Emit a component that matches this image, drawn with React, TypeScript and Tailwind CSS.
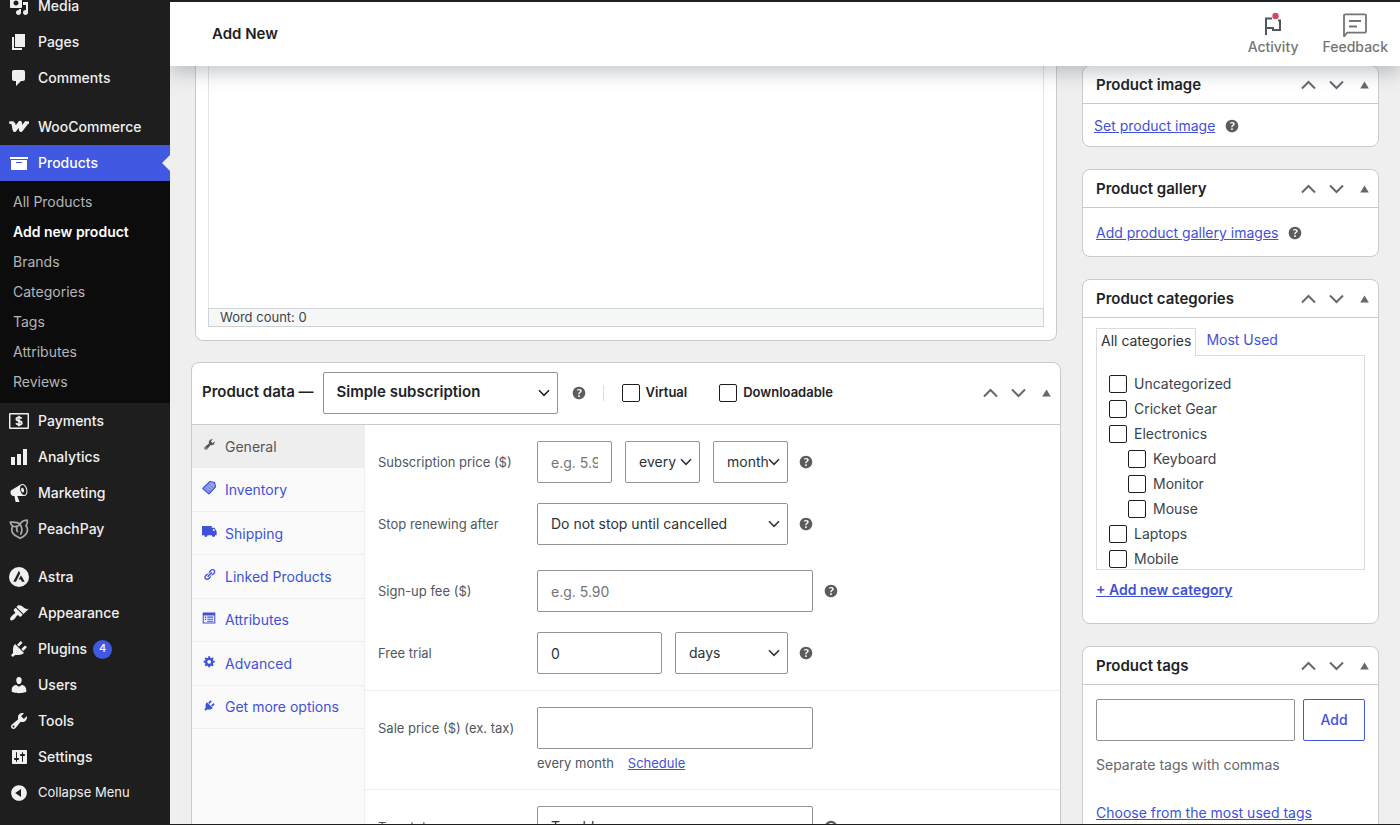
import { useState, type ReactNode } from 'react'
import clsx from 'clsx'

// 20x20 admin icon set
const glyphs = {
  media:
    'M13 11V4c0-.55-.45-1-1-1h-1.67L9 1H5L3.67 3H2c-.55 0-1 .45-1 1v7c0 .55.45 1 1 1h10c.55 0 1-.45 1-1zM7 4.5c1.38 0 2.5 1.12 2.5 2.5S8.38 9.5 7 9.5 4.5 8.38 4.5 7 5.62 4.5 7 4.5zM14 6h5v10.5c0 1.38-1.12 2.5-2.5 2.5S14 17.88 14 16.5s1.12-2.5 2.5-2.5c.17 0 .34.02.5.05V9h-3V6zm-4 8.05V13h2v3.5c0 1.38-1.12 2.5-2.5 2.5S7 17.88 7 16.5 8.12 14 9.5 14c.17 0 .34.02.5.05z',
  page: 'M6 15V2h10v13H6zm-1 1h8v2H3V5h2v11z',
  comments:
    'M5 2h9c1.1 0 2 .9 2 2v7c0 1.1-.9 2-2 2h-2l-5 5v-5H5c-1.1 0-2-.9-2-2V4c0-1.1.9-2 2-2z',
  archive: 'M19 4v2H1V4h18zM2 7h16v10H2V7zm11 3V9H7v1h6z',
  chart: 'M18 18V2h-4v16h4zm-6 0V7H8v11h4zm-6 0v-8H2v8h4z',
  megaphone:
    'M18.15 5.94c.46 1.62.38 3.22-.02 4.48-.42 1.28-1.26 2.18-2.3 2.48-.16.06-.26.06-.4.06-.06.02-.12.02-.18.02-.06.02-.14.02-.22.02h-6.8l2.22 5.5c.02.14-.06.26-.14.34-.08.1-.24.16-.34.16H6.95c-.1 0-.26-.06-.34-.16-.08-.08-.16-.2-.14-.34l-1-5.5H4.25l-.02-.02c-.5.06-1.08-.18-1.54-.62s-.88-1.08-1.06-1.88c-.24-.8-.2-1.56-.02-2.2.18-.62.58-1.08 1.06-1.3l.02-.02 9-5.4c.1-.06.18-.1.24-.16.06-.04.14-.08.24-.12.16-.08.28-.12.5-.18 1.04-.3 2.24.1 3.22.98s1.84 2.24 2.26 3.86zm-2.58 5.98h-.02c.4-.1.74-.34 1.04-.7.58-.7.86-1.76.86-3.04 0-.64-.1-1.3-.28-1.98-.34-1.36-1.02-2.5-1.78-3.24s-1.68-1.1-2.46-.88c-.82.22-1.4.96-1.7 2-.32 1.04-.28 2.36.06 3.72.38 1.36 1 2.5 1.8 3.24.78.74 1.62 1.1 2.48.88zm-2.54-7.08c.22-.04.42-.02.62.04.38.16.76.48 1.02 1s.42 1.2.42 1.78c0 .3-.04.56-.12.8-.18.48-.44.84-.86.94-.34.1-.8-.06-1.14-.4s-.64-.86-.78-1.5c-.18-.62-.12-1.24.02-1.72s.48-.84.82-.94z',
  appearance:
    'M14.48 11.06L7.41 3.99l1.5-1.5c.5-.56 2.3-.47 3.51.32 1.21.8 1.43 1.28 2.91 2.1 1.18.64 2.45 1.26 4.45.85zm-.71.71L6.7 4.7 4.93 6.47c-.39.39-.39 1.02 0 1.41l1.06 1.06c.39.39.39 1.03 0 1.42-.6.6-1.43 1.11-2.21 1.69-.35.26-.7.53-1.01.84C1.43 14.23.4 16.08 1.4 17.07c.99 1 2.84-.03 4.18-1.36.31-.31.58-.66.85-1.02.57-.78 1.08-1.61 1.69-2.21.39-.39 1.02-.39 1.41 0l1.06 1.06c.39.39 1.02.39 1.41 0z',
  plugins:
    'M13.11 4.36L9.87 7.6 8 5.73l3.24-3.24c.35-.34 1.05-.2 1.56.32.52.51.66 1.21.31 1.55zm-8 1.77l.91-1.12 9.01 9.01-1.19.84c-.71.71-2.63 1.16-3.82 1.16H6.14L4.9 17.26c-.59.59-1.54.59-2.12 0-.59-.58-.59-1.53 0-2.12l1.24-1.24v-3.88c0-1.13.4-3.19 1.09-3.89zm7.26 3.97l3.24-3.24c.34-.35 1.04-.21 1.55.31.52.51.66 1.21.31 1.55l-3.24 3.25z',
  users:
    'M10 9.25c-2.27 0-2.73-3.44-2.73-3.44C7 4.02 7.82 2 9.97 2c2.16 0 2.98 2.02 2.71 3.81 0 0-.41 3.44-2.68 3.44zm0 2.57L12.72 10c2.39 0 4.52 2.33 4.52 4.53v2.49s-3.65 1.13-7.24 1.13c-3.65 0-7.24-1.13-7.24-1.13v-2.49c0-2.25 1.94-4.48 4.47-4.48z',
  tools:
    'M16.68 9.77c-1.34 1.34-3.3 1.67-4.95.99l-5.41 6.52c-.99.99-2.59.99-3.58 0s-.99-2.59 0-3.57l6.52-5.42c-.68-1.65-.35-3.61.99-4.95 1.28-1.28 3.12-1.62 4.72-1.06l-2.89 2.89 2.82 2.82 2.86-2.87c.53 1.58.18 3.39-1.08 4.65zM3.81 16.21c.4.39 1.04.39 1.43 0 .4-.4.4-1.04 0-1.43-.39-.4-1.03-.4-1.43 0-.39.39-.39 1.03 0 1.43z',
  settings:
    'M18 16V4c0-.55-.45-1-1-1H4c-.55 0-1 .45-1 1v12c0 .55.45 1 1 1h13c.55 0 1-.45 1-1zM8 11h1c.55 0 1 .45 1 1s-.45 1-1 1H8v1.5c0 .28-.22.5-.5.5s-.5-.22-.5-.5V13H6c-.55 0-1-.45-1-1s.45-1 1-1h1V5.5c0-.28.22-.5.5-.5s.5.22.5.5V11zm5-2h-1c-.55 0-1-.45-1-1s.45-1 1-1h1V5.5c0-.28.22-.5.5-.5s.5.22.5.5V7h1c.55 0 1 .45 1 1s-.45 1-1 1h-1v5.5c0 .28-.22.5-.5.5s-.5-.22-.5-.5V9z',
  collapse:
    'M10 2.16c4.33 0 7.84 3.51 7.84 7.84s-3.51 7.84-7.84 7.84S2.16 14.33 2.16 10 5.71 2.16 10 2.16zm2 11.72V6.12L6.18 9.97z',
  help: 'M17 10c0-3.87-3.14-7-7-7-3.87 0-7 3.13-7 7s3.13 7 7 7c3.86 0 7-3.13 7-7zm-6.3 1.48H9.14v-.43c0-.38.08-.7.24-.98s.46-.57.88-.89c.41-.29.68-.53.81-.71.14-.18.2-.39.2-.62 0-.25-.09-.44-.28-.58-.19-.13-.45-.19-.79-.19-.58 0-1.25.15-2 .45l-.64-1.28c.87-.49 1.8-.74 2.77-.74.81 0 1.45.2 1.92.58.48.39.71.91.71 1.55 0 .43-.09.8-.29 1.11-.19.32-.57.67-1.11 1.06-.38.28-.61.49-.71.63-.1.15-.15.34-.15.57v.47zm-1.47 2.74c-.18-.17-.27-.42-.27-.73 0-.33.08-.58.26-.75s.43-.25.77-.25c.32 0 .57.09.75.26s.27.42.27.74c0 .3-.09.55-.27.72-.18.18-.43.27-.75.27-.33 0-.58-.09-.76-.26z',
  truck:
    'M0 2.500h13v2.500h3.500L19.500 9.500V15h-2a2.200 2.200 0 1 1-4.400 0H7.400A2.200 2.200 0 1 1 3 15H0zM14.500 6.500v2.500h3l-1.500-2.500z',
  links:
    'M17.74 2.76c1.68 1.69 1.68 4.41 0 6.1l-1.53 1.52c-1.12 1.12-2.7 1.47-4.14 1.09l2.62-2.61.76-.77.76-.76c.84-.84.84-2.2 0-3.04-.84-.85-2.2-.85-3.04 0l-.77.76-3.38 3.38c-.37-1.44-.02-3.02 1.1-4.14l1.52-1.53c1.69-1.68 4.42-1.68 6.1 0zM8.59 13.43l5.34-5.34c.42-.42.42-1.1 0-1.52-.44-.43-1.13-.39-1.53 0l-5.33 5.34c-.42.42-.42 1.1 0 1.52.44.43 1.13.39 1.52 0zm-.76 2.29l4.14-4.15c.38 1.44.03 3.02-1.09 4.14l-1.52 1.53c-1.69 1.68-4.41 1.68-6.1 0-1.68-1.68-1.68-4.42 0-6.1l1.53-1.52c1.12-1.12 2.7-1.47 4.14-1.1l-4.14 4.15c-.85.84-.85 2.2 0 3.05.84.84 2.2.84 3.04 0z',
  listView:
    'M19 18V2H1v16h18zM2.500 6.500h15v10h-15zM4 8h2v2H4zM7.500 8H16v1.500H7.500zM4 11h2v2H4zM7.500 11H16v1.500H7.500zM7.500 14H16v1.500H7.500z',
  gear: 'M18 12h-2.18c-.17.7-.44 1.35-.81 1.93l1.54 1.54-2.1 2.1-1.54-1.54c-.58.36-1.23.63-1.91.79V19H8v-2.18c-.68-.16-1.33-.43-1.91-.79l-1.54 1.54-2.12-2.12 1.54-1.54c-.36-.58-.63-1.23-.79-1.91H1V9.03h2.17c.16-.7.44-1.35.8-1.94L2.43 5.55l2.1-2.1 1.54 1.54c.58-.37 1.24-.64 1.93-.81V2h3v2.18c.68.16 1.33.43 1.91.79l1.54-1.54 2.12 2.12-1.54 1.54c.36.59.64 1.24.8 1.94H18V12zm-8.5 1.5c1.66 0 3-1.34 3-3s-1.34-3-3-3-3 1.34-3 3 1.34 3 3 3z',
}

type Glyph = keyof typeof glyphs

function Icon({ name, className }: { name: Glyph; className: string }) {
  return (
    <svg viewBox="0 0 20 20" fill="currentColor" fillRule="evenodd" className={className} aria-hidden="true">
      <path d={glyphs[name]} />
    </svg>
  )
}

function WooIcon() {
  return (
    <svg viewBox="0 0 20 20" fill="none" stroke="currentColor" strokeLinejoin="round" className="size-5" aria-hidden="true">
      <path d="M.2 5.600h4.600" strokeWidth="2.600" />
      <path d="M4.200 5.800 5.600 13 11 5.800 11.900 13 17.600 5.500" strokeWidth="3.900" />
      <path d="M16 5.600h4" strokeWidth="2.600" />
    </svg>
  )
}

function PaymentsIcon() {
  return (
    <svg viewBox="0 0 20 20" fill="none" stroke="currentColor" className="size-5" aria-hidden="true">
      <rect x="0.700" y="2.700" width="18.600" height="14.600" rx="0.500" strokeWidth="1.500" />
      <path d="M10 4.800v10.400" strokeWidth="1.600" />
      <path
        d="M12.700 7.700c-.4-.9-1.400-1.300-2.700-1.300-1.500 0-2.600.6-2.600 1.700 0 2.500 5.300 1.300 5.300 3.800 0 1.100-1.100 1.800-2.700 1.800-1.400 0-2.400-.5-2.800-1.500"
        strokeWidth="1.900"
      />
    </svg>
  )
}

function PeachIcon() {
  return (
    <svg
      viewBox="0 0 20 20"
      fill="none"
      stroke="currentColor"
      strokeWidth="1.700"
      strokeLinecap="round"
      strokeLinejoin="round"
      className="size-5 text-[#a7aaad]"
      aria-hidden="true"
    >
      <path d="M11 5.200C8.500 2.800 4.600 3.200 1.300 3.200c.5 1.800 1.400 3.200 2.500 4-1.600 2.800-.9 6.300 1.300 8.400 1.700 1.600 3.900 2 6 3.700 2.400-1 5.500-2.800 6.700-5.600 1.100-2.600.8-5.200-.9-7 1.200-1.300 1.700-3.200 1.300-5.600-2.800.2-5.700 1.200-7.200 4.100z" />
      <path d="M3.800 7.200c2.200.6 5.400.3 7.200-2 2.200 3.200 2.500 6.500.8 9.800M8 8.500c-.6 1.500-.4 2.900.5 4.200" />
    </svg>
  )
}

function AstraIcon() {
  return (
    <svg viewBox="0 0 20 20" className="size-5" aria-hidden="true">
      <circle cx="10" cy="10" r="10" fill="currentColor" />
      <path d="M9.900 3.700 11.200 6.300 7 14.800H4.300zM12 8.200l3.700 6.600h-2.800l-1-2.200H9.600z" fill="#1e1e1e" />
    </svg>
  )
}

function TagIcon() {
  return (
    <svg viewBox="0 0 16 16" fill="none" stroke="currentColor" className="size-4" aria-hidden="true">
      <path d="M9 1.500 13.500 2.500l1 4.400-6.500 7L1.800 8.400z" fill="#98a6f0" strokeWidth="1.200" />
      <path d="m3.500 7 5.800 5.400M5.200 5.200l5.800 5.400M7 3.400l5.700 5.200" strokeWidth=".6" />
    </svg>
  )
}

const itemClass = 'flex h-9 w-full items-center gap-[9px] pl-[9px] text-sm font-medium text-[#f0f0f1]'

function MenuItem({ icon, label, count }: { icon: ReactNode; label: string; count?: number }) {
  return (
    <li>
      <a href="#" className={itemClass}>
        <span className="flex w-5 justify-center">{icon}</span>
        {label}
        {count && (
          <span className="-ml-[3px] flex size-[19px] items-center justify-center rounded-full bg-[#4058e2] text-[11px] text-white">
            {count}
          </span>
        )}
      </a>
    </li>
  )
}

const subItems = ['All Products', 'Add new product', 'Brands', 'Categories', 'Tags', 'Attributes', 'Reviews']

function AdminMenu() {
  return (
    <nav className="relative z-20 w-[170px] shrink-0 overflow-hidden bg-[#1e1e1e]">
      <ul className="-mt-3">
        <MenuItem icon={<Icon name="media" className="size-5" />} label="Media" />
        <MenuItem icon={<Icon name="page" className="size-5" />} label="Pages" />
        <MenuItem icon={<Icon name="comments" className="size-5" />} label="Comments" />
        <li className="h-[13px]" />
        <MenuItem icon={<WooIcon />} label="WooCommerce" />
        <li>
          <a href="#" className={clsx(itemClass, 'relative bg-[#4058e2]')}>
            <Icon name="archive" className="size-5 text-white" />
            <span className="text-white">Products</span>
            <span className="absolute right-0 border-y-8 border-r-8 border-y-transparent border-r-[#efefef]" />
          </a>
          <ul className="bg-[#0c0c0c] py-[6px]">
            {subItems.map((item) => (
              <li key={item}>
                <a
                  href="#"
                  className={clsx(
                    'flex h-[30px] items-center pl-[13px] text-sm',
                    item === 'Add new product' ? 'font-semibold text-white' : 'text-[#b5b5b5]',
                  )}
                >
                  {item}
                </a>
              </li>
            ))}
          </ul>
        </li>
        <MenuItem icon={<PaymentsIcon />} label="Payments" />
        <MenuItem icon={<Icon name="chart" className="size-5" />} label="Analytics" />
        <MenuItem icon={<Icon name="megaphone" className="size-5" />} label="Marketing" />
        <MenuItem icon={<PeachIcon />} label="PeachPay" />
        <li className="h-3" />
        <MenuItem icon={<AstraIcon />} label="Astra" />
        <MenuItem icon={<Icon name="appearance" className="size-5" />} label="Appearance" />
        <MenuItem icon={<Icon name="plugins" className="size-5" />} label="Plugins" count={4} />
        <MenuItem icon={<Icon name="users" className="size-5" />} label="Users" />
        <MenuItem icon={<Icon name="tools" className="size-5" />} label="Tools" />
        <MenuItem icon={<Icon name="settings" className="size-5" />} label="Settings" />
        <li>
          <button type="button" className="flex h-9 w-full items-center gap-[9px] pl-[9px] text-[13px] text-[#f0f0f1]">
            <Icon name="collapse" className="size-5" />
            Collapse Menu
          </button>
        </li>
      </ul>
    </nav>
  )
}

function TopBar() {
  return (
    <header className="relative z-10 flex h-16 shrink-0 items-center justify-between bg-white pr-3 pl-[42px] shadow-[0_8px_16px_rgba(85,93,102,0.3)]">
      <h1 className="text-[15px] font-semibold text-[#1e1e1e]">Add New</h1>
      <div className="flex gap-6 text-sm font-medium text-[#757575]">
        <button type="button" className="flex flex-col items-center">
          <svg viewBox="0 0 24 26" fill="none" stroke="#50575e" strokeWidth="2" className="h-[26px] w-6" aria-hidden="true">
            <path d="M5 24V7.500h6M5 17h7v2h7V9.500h-2" />
            <circle cx="14.500" cy="5" r="3.200" fill="#d1495b" stroke="none" />
          </svg>
          Activity
        </button>
        <button type="button" className="flex flex-col items-center">
          <svg
            viewBox="0 0 26 26"
            fill="none"
            stroke="currentColor"
            strokeWidth="1.800"
            strokeLinejoin="round"
            className="size-[26px]"
            aria-hidden="true"
          >
            <path d="M2 25.500V4.500c0-.8.4-1.200 1.200-1.200h19.600c.8 0 1.200.4 1.200 1.200v16c0 .8-.4 1.200-1.200 1.200H5z" />
            <path d="M7 10h12M7 15.500h8" />
          </svg>
          Feedback
        </button>
      </div>
    </header>
  )
}

function PanelHandles({ panel }: { panel: string }) {
  return (
    <div className="flex items-center gap-[13px] pr-[9px] text-[#646970]">
      <button type="button" aria-label={`Move up: ${panel}`}>
        <svg viewBox="0 0 15 10" fill="none" stroke="currentColor" strokeWidth="2" className="h-[10px] w-[15px]">
          <path d="m1 8.500 6.500-6.500L14 8.500" />
        </svg>
      </button>
      <button type="button" aria-label={`Move down: ${panel}`}>
        <svg viewBox="0 0 15 10" fill="none" stroke="currentColor" strokeWidth="2" className="h-[10px] w-[15px]">
          <path d="M1 1.500 7.500 8 14 1.500" />
        </svg>
      </button>
      <button type="button" aria-label={`Toggle panel: ${panel}`} className="pl-[3px]">
        <svg viewBox="0 0 9 8" fill="currentColor" className="h-2 w-[9px]">
          <path d="M4.500.5 8.800 7.500H.2z" />
        </svg>
      </button>
    </div>
  )
}

function SidePanel({ title, children }: { title: string; children: ReactNode }) {
  return (
    <section className="rounded-lg border border-[#c9cacc] bg-white">
      <div className="flex h-[38px] items-center justify-between border-b border-[#c9cacc] pl-[13px]">
        <h2 className="text-[15px] font-semibold text-[#1d2327]">{title}</h2>
        <PanelHandles panel={title} />
      </div>
      {children}
    </section>
  )
}

function Help({ className }: { className?: string }) {
  return (
    <button type="button" aria-label="Help" className={clsx('text-[#5c5c5c]', className)}>
      <Icon name="help" className="size-[18px]" />
    </button>
  )
}

const boxClass = 'h-[42px] rounded-xs border border-[#949494] bg-white'
const fieldClass = clsx(boxClass, 'px-[13px] text-sm text-[#2c3338] placeholder:text-[#757575]')

function Select({ id, label, options, className }: { id: string; label?: string; options: string[]; className: string }) {
  return (
    <div className={clsx('relative flex items-center', className)}>
      <select id={id} aria-label={label} className={clsx(boxClass, 'w-full appearance-none pl-[13px]')}>
        {options.map((option) => (
          <option key={option}>{option}</option>
        ))}
      </select>
      <svg
        viewBox="0 0 12 8"
        fill="none"
        stroke="currentColor"
        strokeWidth="1.600"
        className="pointer-events-none absolute right-2 h-2 w-3"
        aria-hidden="true"
      >
        <path d="m1 1.300 5 5 5-5" />
      </svg>
    </div>
  )
}

function Checkbox({ label, className }: { label: string; className: string }) {
  return (
    <label className={clsx('flex items-center', className)}>
      <input
        type="checkbox"
        className="size-[18px] shrink-0 appearance-none rounded-xs border border-[#1e1e1e] bg-white checked:bg-[#4058e2]"
      />
      {label}
    </label>
  )
}

function Row({ id, label, children }: { id: string; label: string; children: ReactNode }) {
  return (
    <div className="flex items-center">
      <label htmlFor={id} className="w-[159px] shrink-0 text-[13px] text-[#50575e]">
        {label}
      </label>
      <div className="flex items-center gap-[13px]">{children}</div>
    </div>
  )
}

const tabs: { label: string; icon: ReactNode }[] = [
  { label: 'General', icon: <Icon name="tools" className="size-[13px]" /> },
  { label: 'Inventory', icon: <TagIcon /> },
  { label: 'Shipping', icon: <Icon name="truck" className="size-[15px]" /> },
  { label: 'Linked Products', icon: <Icon name="links" className="size-[13px]" /> },
  { label: 'Attributes', icon: <Icon name="listView" className="size-[14px]" /> },
  { label: 'Advanced', icon: <Icon name="gear" className="size-[13px]" /> },
  { label: 'Get more options', icon: <Icon name="plugins" className="size-[13px]" /> },
]

function ProductData() {
  const [active, setActive] = useState('General')

  return (
    <section className="mt-[21px] rounded-lg border border-[#c9cacc] bg-white">
      <div className="flex h-[62px] items-center border-b border-[#c9cacc] pb-[2px] pl-[10px] text-[15px] font-semibold text-[#1d2327]">
        <label htmlFor="product-type">Product data —</label>
        <Select
          id="product-type"
          options={['Simple subscription', 'Simple product', 'Variable product']}
          className="mr-3 ml-[9px] w-[235px]"
        />
        <Help />
        <span className="mr-[18px] ml-[15px] h-4 border-l border-[#dcdcde]" />
        <Checkbox label="Virtual" className="mr-8 gap-[6px] text-[13px]" />
        <Checkbox label="Downloadable" className="gap-[6px] text-[13px]" />
        <div className="ml-auto">
          <PanelHandles panel="Product data" />
        </div>
      </div>
      <div className="flex">
        <div className="w-[173px] shrink-0 border-r border-[#eeeeee] bg-[#fafafa]">
          <ul className="flex h-[304px] flex-col">
            {tabs.map((tab) => (
              <li key={tab.label} className="flex flex-1 border-b border-[#eeeeee]">
                <button
                  type="button"
                  onClick={() => setActive(tab.label)}
                  className={clsx(
                    'flex w-full items-center gap-2 pt-px pl-[9px] text-left text-sm',
                    active === tab.label ? 'bg-[#eeeeee] text-[#555555]' : 'text-[#3f51d9]',
                  )}
                >
                  <span className="flex w-4 justify-center pb-1">{tab.icon}</span>
                  {tab.label}
                </button>
              </li>
            ))}
          </ul>
        </div>
        <div className="flex-1 text-sm text-[#2c3338]">
          <div className="flex flex-col gap-5 border-b border-[#eeeeee] py-4 pl-[13px]">
            <Row id="price" label="Subscription price ($)">
              <input id="price" placeholder="e.g. 5.90" className={clsx(fieldClass, 'w-[75px]')} />
              <Select id="interval" label="Interval" options={['every', 'every 2nd']} className="w-[75px]" />
              <Select id="period" label="Period" options={['month', 'week', 'year']} className="w-[75px]" />
              <Help className="-ml-1" />
            </Row>
            <Row id="length" label="Stop renewing after">
              <Select id="length" options={['Do not stop until cancelled', '1 month']} className="w-[251px]" />
              <Help className="-ml-1" />
            </Row>
            <div className="pt-[5px]">
              <Row id="signup-fee" label="Sign-up fee ($)">
                <input id="signup-fee" placeholder="e.g. 5.90" className={clsx(fieldClass, 'w-[276px]')} />
                <Help className="-ml-1" />
              </Row>
            </div>
            <Row id="trial" label="Free trial">
              <input id="trial" defaultValue="0" className={clsx(fieldClass, 'w-[125px]')} />
              <Select id="trial-period" label="Trial period" options={['days', 'weeks']} className="w-[113px]" />
              <Help className="-ml-1" />
            </Row>
          </div>
          <div className="border-b border-[#eeeeee] py-4 pl-[13px]">
            <Row id="sale-price" label="Sale price ($) (ex. tax)">
              <input id="sale-price" className={clsx(fieldClass, 'w-[276px]')} />
            </Row>
            <p className="mt-1 ml-[159px] flex gap-[14px] text-[13px] leading-5 text-[#50575e]">
              every month
              <a href="#" className="text-[#3f51d9] underline">
                Schedule
              </a>
            </p>
          </div>
          <div className="py-4 pl-[13px]">
            <Row id="tax-status" label="Tax status">
              <Select id="tax-status" options={['Taxable', 'None']} className="w-[276px]" />
              <Help className="-ml-1" />
            </Row>
          </div>
        </div>
      </div>
    </section>
  )
}

const categories = [
  { name: 'Uncategorized' },
  { name: 'Cricket Gear' },
  { name: 'Electronics' },
  { name: 'Keyboard', child: true },
  { name: 'Monitor', child: true },
  { name: 'Mouse', child: true },
  { name: 'Laptops' },
  { name: 'Mobile' },
]

function SideColumn() {
  return (
    <div className="-mt-px flex flex-col gap-[22px] text-sm text-[#3c434a]">
      <SidePanel title="Product image">
        <div className="flex h-[42px] items-center gap-2 pt-0.5 pl-[11px]">
          <a href="#" className="text-[#3f51d9] underline">
            Set product image
          </a>
          <Help />
        </div>
      </SidePanel>
      <SidePanel title="Product gallery">
        <div className="flex h-12 items-center gap-2 pt-0.5 pl-[13px]">
          <a href="#" className="text-[#3f51d9] underline">
            Add product gallery images
          </a>
          <Help />
        </div>
      </SidePanel>
      <SidePanel title="Product categories">
        <div className="h-[305px] px-[13px] pt-[10px]">
          <div className="flex">
            <button
              type="button"
              className="relative -mb-px h-7 border border-b-0 border-[#dcdcde] bg-white px-1 pb-[3px] text-[#2c3338]"
            >
              All categories
            </button>
            <button type="button" className="px-[10px] pb-[3px] text-[#3f51d9]">
              Most Used
            </button>
          </div>
          <div className="h-[215px] overflow-hidden border border-[#dcdcde] pt-[15px]">
            {categories.map((category) => (
              <Checkbox
                key={category.name}
                label={category.name}
                className={clsx('h-[25px] gap-[7px]', category.child ? 'pl-[31px]' : 'pl-3')}
              />
            ))}
          </div>
          <a href="#" className="mt-[10px] inline-block font-semibold text-[#3f51d9] underline">
            + Add new category
          </a>
        </div>
      </SidePanel>
      <SidePanel title="Product tags">
        <div className="px-[13px] pt-[14px] pb-4">
          <div className="flex gap-2">
            <input aria-label="Add new tag" className={clsx(fieldClass, 'min-w-0 flex-1')} />
            <button
              type="button"
              className="w-[62px] rounded-xs border border-[#4058e2] text-sm font-medium text-[#3f51d9]"
            >
              Add
            </button>
          </div>
          <p className="mt-[14px] leading-5 text-[#646970]">Separate tags with commas</p>
          <a href="#" className="mt-7 inline-block leading-5 text-[#3f51d9] underline">
            Choose from the most used tags
          </a>
        </div>
      </SidePanel>
    </div>
  )
}

export default function App() {
  return (
    <div className="flex h-screen overflow-hidden bg-[#efefef] font-[Inter,sans-serif]">
      <AdminMenu />
      <div className="flex min-w-0 flex-1 flex-col border-t-2 border-b border-[#1e1e1e]">
        <TopBar />
        <main className="grid min-h-0 flex-1 grid-cols-[1fr_297px] gap-[21px] overflow-hidden px-[21px]">
          <div>
            <section className="mx-1 rounded-b-lg border border-t-0 border-[#c9cacc] bg-white px-3 pb-[13px]">
              <textarea
                aria-label="Product description"
                className="block h-[242px] w-full resize-none border-x border-[#e3e4e6] bg-white p-3 text-sm"
              />
              <div className="h-[19px] border border-[#d0d3d6] bg-[#f6f7f7] px-[11px] text-[13px] leading-[17px] text-[#3c434a]">
                Word count: 0
              </div>
            </section>
            <ProductData />
          </div>
          <SideColumn />
        </main>
      </div>
    </div>
  )
}
